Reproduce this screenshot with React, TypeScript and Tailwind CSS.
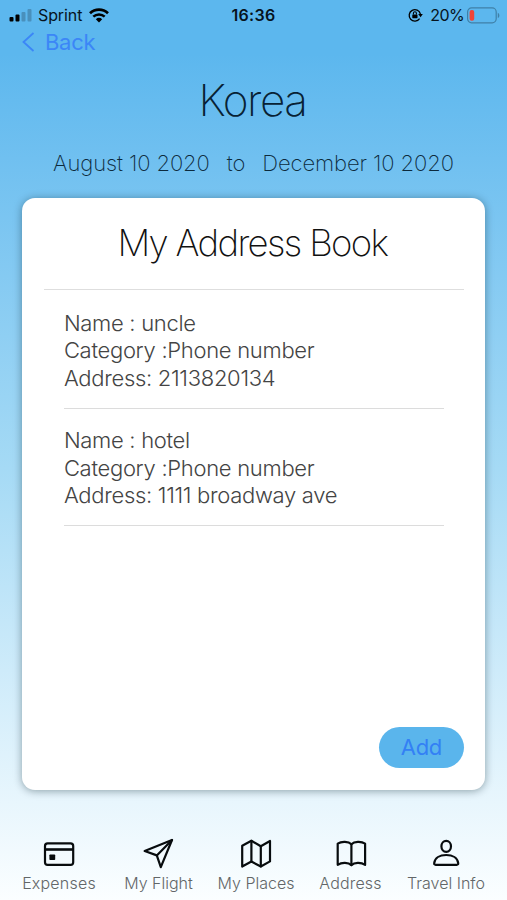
import type { ReactNode } from "react";

const entries = [
  { name: "uncle", category: "Phone number", address: "2113820134" },
  { name: "hotel", category: "Phone number", address: "1111 broadway ave" },
];

function StatusBar() {
  return (
    <div className="grid h-[30px] grid-cols-3 items-center pl-[9px] pr-[7px] text-[16px] leading-[30px] text-[#06131d]">
      <div className="flex items-center">
        <svg width="23" height="13" viewBox="0 0 23 13" className="mr-[6px]">
          <rect x="0.5" y="8" width="4" height="4.5" rx="1" fill="#000" />
          <rect x="6.5" y="5.5" width="4" height="7" rx="1" fill="#000" />
          <rect x="12.5" y="3" width="4" height="9.5" rx="1" fill="#4990bc" />
          <rect x="18.5" y="0" width="4" height="12.5" rx="1" fill="#4990bc" />
        </svg>
        <span className="whitespace-nowrap tracking-[-0.1px]">Sprint</span>
        <svg width="20" height="15" viewBox="0 0 20 15" className="ml-[7px]" fill="none" stroke="#000">
          <path d="M1 5.2a13 13 0 0 1 18 0" strokeWidth="2.7" />
          <path d="M4.3 8.7a8.3 8.3 0 0 1 11.4 0" strokeWidth="2.5" />
          <path d="M10 14.6 6.8 11.3a4.8 4.8 0 0 1 6.4 0z" fill="#000" stroke="none" />
        </svg>
      </div>
      <span className="pr-[2px] text-center font-semibold tracking-[0.3px]">16:36</span>
      <div className="flex items-center justify-end">
        <svg width="15" height="14" viewBox="0 0 15 14" className="mr-[7px]" fill="none" stroke="#000">
          <path d="M11.6 10.6a5.7 5.7 0 1 1 .8-4.6" strokeWidth="1.3" />
          <path d="M10.2 6h4.6l-2.2 3.2z" fill="#000" stroke="none" />
          <rect x="4.3" y="6.4" width="5.2" height="3.8" rx="0.6" fill="#000" stroke="none" />
          <path d="M5.4 6.5V5.3a1.5 1.5 0 0 1 3 0v1.2" strokeWidth="1.1" />
        </svg>
        <span className="tracking-[-0.6px]">20%</span>
        <svg width="33" height="17" viewBox="0 0 33 17" className="ml-[3px]">
          <rect x="0.6" y="0.9" width="28.6" height="14.9" rx="4" fill="none" stroke="#3f80a8" strokeWidth="1.2" />
          <rect x="2.6" y="3" width="4.6" height="10.8" rx="2" fill="#f04438" />
          <path d="M30.8 5.8v5.2q1.6-.6 1.6-2.6t-1.6-2.6z" fill="#3f80a8" />
        </svg>
      </div>
    </div>
  );
}

function TabIcon({ children }: { children: ReactNode }) {
  return (
    <svg
      width="34"
      height="34"
      viewBox="0 0 34 34"
      fill="none"
      stroke="#080c0e"
      strokeWidth="2.2"
      strokeLinecap="round"
      strokeLinejoin="round"
    >
      {children}
    </svg>
  );
}

function Tab({ icon, label, className }: { icon: ReactNode; label: string; className: string }) {
  return (
    <div className={`flex flex-col items-center ${className}`}>
      <TabIcon>{icon}</TabIcon>
      <span className="mt-[2px] whitespace-nowrap text-[16px] font-light leading-[20px] text-[#626668]">
        {label}
      </span>
    </div>
  );
}

const cardIcon = (
  <>
    <rect x="3" y="6.3" width="28.2" height="21.6" rx="2.6" />
    <path d="M3 12.5h28.2" strokeWidth="2.6" strokeLinecap="butt" />
    <rect x="7.4" y="17.4" width="5.8" height="5.6" rx="0.8" fill="#080c0e" stroke="none" />
  </>
);

const planeIcon = (
  <>
    <path d="M30 3 2.7 14 14.8 18.4 18.8 30.2z" />
    <path d="M30 3 14.8 18.4" />
  </>
);

const mapIcon = (
  <>
    <path d="M3.2 8.8 12.4 3.8 21.8 9.2 31 4v20.4l-9.2 5.1-9.4-5-9.2 5z" />
    <path d="M12.4 3.8v20.7M21.8 9.2v20.3" />
  </>
);

const bookIcon = (
  <>
    <path d="M17.4 7.2C14.5 4.4 7.6 4.1 3.7 6.6v21.2c4-2.6 10.8-2.4 13.7.3 2.9-2.7 9.7-2.9 13.7-.3V6.6c-3.9-2.5-10.8-2.2-13.7.6z" />
    <path d="M17.4 7.2v20.9" />
  </>
);

const personIcon = (
  <>
    <ellipse cx="17.2" cy="9.3" rx="4.8" ry="5.5" />
    <path d="M6.6 27.8q-1.5 0-1.4-1.6c.6-5.4 5.6-8.2 12-8.2s11.4 2.8 12 8.2q.1 1.6-1.4 1.6z" />
  </>
);

export default function App() {
  return (
    <div className="flex h-[900px] w-[507px] flex-col overflow-hidden bg-linear-to-b from-[#5cb7ee] from-6% via-[#a5daf5] via-52% to-[#fbfeff] to-100% font-['Inter','Liberation_Sans',sans-serif]">
      <StatusBar />
      <button className="flex h-[24px] items-center self-start pl-[22px] text-[22px] leading-[24px] tracking-[-0.3px] text-[#3b86f7]">
        <svg width="13" height="20" viewBox="0 0 13 20" className="mr-[10px]" fill="none" stroke="currentColor" strokeWidth="1.8">
          <path d="M11.5 1 1.5 10l10 9" />
        </svg>
        Back
      </button>
      <h1 className="mt-[21px] pr-[2px] text-center text-[44px] font-extralight leading-[50px] tracking-[-1.4px] text-[#082234]">
        Korea
      </h1>
      <div className="mt-[24px] flex h-[28px] justify-center gap-[17px] text-[22px] font-extralight leading-[28px] tracking-[-0.1px] text-[#0c2a3c]">
        <span>August 10 2020</span>
        <span>to</span>
        <span>December 10 2020</span>
      </div>

      <main className="ml-[22.4px] mt-[21px] flex h-[592px] w-[463px] flex-col rounded-[13px] bg-white px-[21.5px] shadow-[0_1px_8px_rgba(0,30,40,0.4)]">
        <h2 className="h-[92px] border-b border-[#dedede] pr-[3px] pt-[21px] text-center text-[36.5px] font-extralight leading-[48px] tracking-[-1.65px] text-[#111]">
          My Address Book
        </h2>
        <div className="px-[20px] pt-[1px]">
          {entries.map((entry) => (
            <div
              key={entry.name}
              className="h-[117.5px] border-b border-[#dcdcdc] pt-[18.5px] text-[22px] font-light leading-[27.6px] tracking-[-0.3px] text-[#444]"
            >
              <p>Name : {entry.name}</p>
              <p>Category :{entry.category}</p>
              <p>Address: {entry.address}</p>
            </div>
          ))}
        </div>
        <button className="mb-[22px] mt-auto h-[41px] w-[85px] self-end rounded-full bg-[#5ab5ec] text-[22px] tracking-[-0.3px] text-[#3380f5]">
          Add
        </button>
      </main>

      <nav className="mt-[47px] flex gap-[25px] pl-[21.5px]">
        <Tab icon={cardIcon} label="Expenses" className="mr-[2.5px] w-[75px] tracking-[0.2px]" />
        <Tab icon={planeIcon} label="My Flight" className="w-[69px]" />
        <Tab icon={mapIcon} label="My Places" className="w-[76px]" />
        <Tab icon={bookIcon} label="Address" className="w-[63px] tracking-[0.15px]" />
        <Tab icon={personIcon} label="Travel Info" className="w-[78px]" />
      </nav>
    </div>
  );
}
